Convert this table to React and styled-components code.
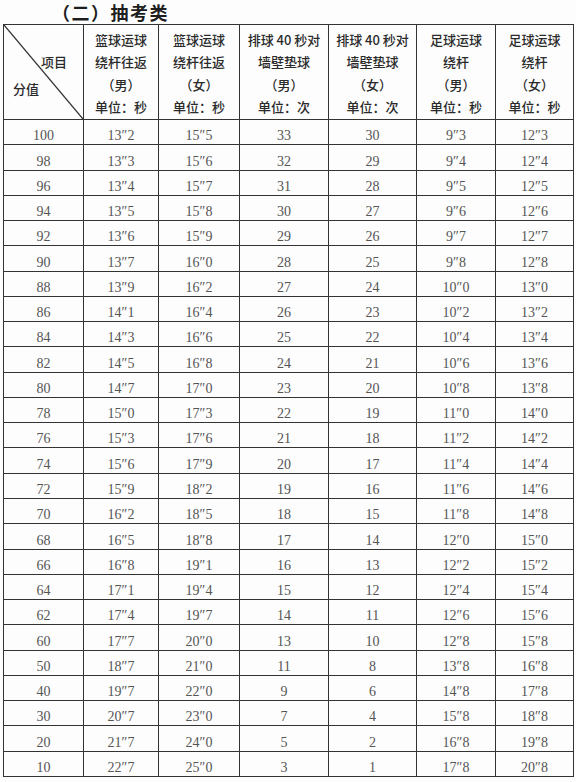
import React from "react";
import styled, { createGlobalStyle } from "styled-components";

const GlobalStyle = createGlobalStyle`
  html, body {
    margin: 0;
    padding: 0;
    background: #fdfdfd;
  }
`;

const Page = styled.div`
  width: 576px;
  height: 782px;
  padding: 0 0 0 3px;
  box-sizing: border-box;
  overflow: hidden;
`;

const Title = styled.h2`
  margin: 0;
  padding-left: 49px;
  height: 24px;
  line-height: 26px;
  font-family: "Noto Sans CJK SC", sans-serif;
  font-size: 18px;
  font-weight: 700;
  color: #1e1e1e;
  letter-spacing: 1.5px;
  transform: translateY(-1px);
`;

const Table = styled.table`
  border-collapse: collapse;
  table-layout: fixed;
  width: 570px;
`;

const HeadCell = styled.th`
  height: 95px;
  padding: 4px 0 0;
  box-sizing: border-box;
  border: 1.5px solid #333;
  vertical-align: top;
  font-family: "Noto Sans CJK SC", sans-serif;
  font-size: 13px;
  font-weight: 500;
  line-height: 22.3px;
  color: #2a2a2a;
  text-align: center;
  white-space: nowrap;
`;

const CornerCell = styled(HeadCell)`
  position: relative;
  padding: 0;
`;

const Diagonal = styled.svg`
  position: absolute;
  inset: 0;
  width: 100%;
  height: 100%;
`;

const CornerLabels = styled.div`
  display: flex;
  flex-direction: column;
  height: 100%;
  padding: 26px 16px 0 9px;
  box-sizing: border-box;
  gap: 5px;
`;

const CornerLabel = styled.span`
  align-self: ${(p) => (p.$right ? "flex-end" : "flex-start")};
  line-height: 22px;
`;

const Cell = styled.td`
  height: 25.27px;
  padding: 0 0 1px;
  box-sizing: border-box;
  border: 1.5px solid #333;
  vertical-align: bottom;
  text-align: center;
  font-family: "Liberation Serif", "DejaVu Serif", serif;
  font-size: 14px;
  line-height: 14px;
  color: #555;
`;

const widths = [80, 75, 81, 89, 88, 79, 78];

const headers = [
  ["篮球运球", "绕杆往返", "（男）", "单位：秒"],
  ["篮球运球", "绕杆往返", "（女）", "单位：秒"],
  ["排球 40 秒对", "墙壁垫球", "（男）", "单位：次"],
  ["排球 40 秒对", "墙壁垫球", "（女）", "单位：次"],
  ["足球运球", "绕杆", "（男）", "单位：秒"],
  ["足球运球", "绕杆", "（女）", "单位：秒"],
];

const split = (s) => s.split(" ");

const scores = split("100 98 96 94 92 90 88 86 84 82 80 78 76 74 72 70 68 66 64 62 60 50 40 30 20 10");
const columns = [
  split("13.2 13.3 13.4 13.5 13.6 13.7 13.9 14.1 14.3 14.5 14.7 15.0 15.3 15.6 15.9 16.2 16.5 16.8 17.1 17.4 17.7 18.7 19.7 20.7 21.7 22.7"),
  split("15.5 15.6 15.7 15.8 15.9 16.0 16.2 16.4 16.6 16.8 17.0 17.3 17.6 17.9 18.2 18.5 18.8 19.1 19.4 19.7 20.0 21.0 22.0 23.0 24.0 25.0"),
  split("33 32 31 30 29 28 27 26 25 24 23 22 21 20 19 18 17 16 15 14 13 11 9 7 5 3"),
  split("30 29 28 27 26 25 24 23 22 21 20 19 18 17 16 15 14 13 12 11 10 8 6 4 2 1"),
  split("9.3 9.4 9.5 9.6 9.7 9.8 10.0 10.2 10.4 10.6 10.8 11.0 11.2 11.4 11.6 11.8 12.0 12.2 12.4 12.6 12.8 13.8 14.8 15.8 16.8 17.8"),
  split("12.3 12.4 12.5 12.6 12.7 12.8 13.0 13.2 13.4 13.6 13.8 14.0 14.2 14.4 14.6 14.8 15.0 15.2 15.4 15.6 15.8 16.8 17.8 18.8 19.8 20.8"),
];

const fmt = (v) => v.replace(".", "″");

export default function App() {
  return (
    <Page>
      <GlobalStyle />
      <Title>（二）抽考类</Title>
      <Table>
        <colgroup>
          {widths.map((w, i) => (
            <col key={i} style={{ width: w }} />
          ))}
        </colgroup>
        <thead>
          <tr>
            <CornerCell>
              <Diagonal viewBox="0 0 100 100" preserveAspectRatio="none">
                <line x1="0" y1="0" x2="100" y2="100" stroke="#333" strokeWidth="1.3" vectorEffect="non-scaling-stroke" />
              </Diagonal>
              <CornerLabels>
                <CornerLabel $right>项目</CornerLabel>
                <CornerLabel>分值</CornerLabel>
              </CornerLabels>
            </CornerCell>
            {headers.map((lines, i) => (
              <HeadCell key={i}>
                {lines.map((l, j) => (
                  <div key={j}>{l}</div>
                ))}
              </HeadCell>
            ))}
          </tr>
        </thead>
        <tbody>
          {scores.map((s, r) => (
            <tr key={s}>
              <Cell>{s}</Cell>
              {columns.map((col, c) => (
                <Cell key={c}>{fmt(col[r])}</Cell>
              ))}
            </tr>
          ))}
        </tbody>
      </Table>
    </Page>
  );
}
